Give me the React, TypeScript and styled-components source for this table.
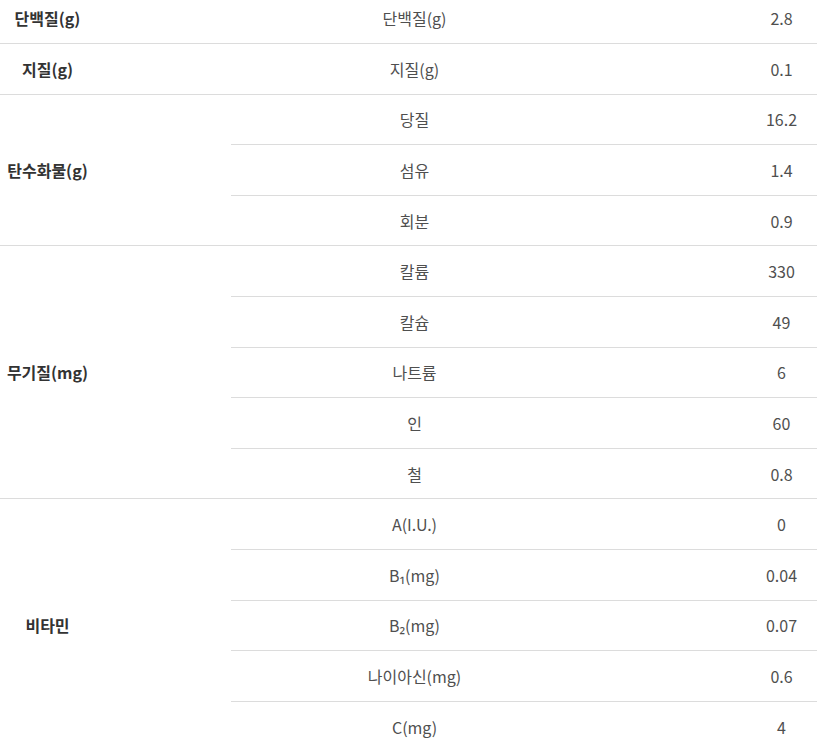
import React from "react";
import styled, { createGlobalStyle } from "styled-components";

const GlobalStyle = createGlobalStyle`
  html, body {
    margin: 0;
    padding: 0;
    background: #ffffff;
    overflow: hidden;
  }
  body {
    font-family: "Noto Sans CJK KR", "Noto Sans", sans-serif;
  }
`;

const Viewport = styled.div`
  width: 817px;
  height: 740px;
  overflow: hidden;
`;

const Table = styled.div`
  width: 1101px;
  margin-left: -136px;
  margin-top: -6.6px;
  display: flex;
  flex-direction: column;
`;

const Group = styled.div`
  display: grid;
  grid-template-columns: 367px 1fr;
  border-bottom: 1px solid #dcdcdc;
`;

const GroupLabel = styled.div`
  display: flex;
  align-items: center;
  justify-content: center;
  font-size: 16px;
  font-weight: 700;
  color: #333333;
`;

const SubList = styled.div`
  display: flex;
  flex-direction: column;
`;

const SubRow = styled.div`
  display: grid;
  grid-template-columns: 1fr 1fr;
  height: 49.6px;
  & + & {
    border-top: 1px solid #dcdcdc;
  }
`;

const Cell = styled.div`
  display: flex;
  align-items: center;
  justify-content: center;
  font-size: 16px;
  font-weight: 400;
  color: #4f4f4f;
`;

type Item = [string, string];
type GroupData = { label: string; items: Item[] };

const groups: GroupData[] = [
  { label: "단백질(g)", items: [["단백질(g)", "2.8"]] },
  { label: "지질(g)", items: [["지질(g)", "0.1"]] },
  {
    label: "탄수화물(g)",
    items: [
      ["당질", "16.2"],
      ["섬유", "1.4"],
      ["회분", "0.9"],
    ],
  },
  {
    label: "무기질(mg)",
    items: [
      ["칼륨", "330"],
      ["칼슘", "49"],
      ["나트륨", "6"],
      ["인", "60"],
      ["철", "0.8"],
    ],
  },
  {
    label: "비타민",
    items: [
      ["A(I.U.)", "0"],
      ["B₁(mg)", "0.04"],
      ["B₂(mg)", "0.07"],
      ["나이아신(mg)", "0.6"],
      ["C(mg)", "4"],
    ],
  },
];

export default function App() {
  return (
    <>
      <GlobalStyle />
      <Viewport>
        <Table>
          {groups.map((g) => (
            <Group key={g.label}>
              <GroupLabel>{g.label}</GroupLabel>
              <SubList>
                {g.items.map(([name, value]) => (
                  <SubRow key={name}>
                    <Cell>{name}</Cell>
                    <Cell>{value}</Cell>
                  </SubRow>
                ))}
              </SubList>
            </Group>
          ))}
        </Table>
      </Viewport>
    </>
  );
}
